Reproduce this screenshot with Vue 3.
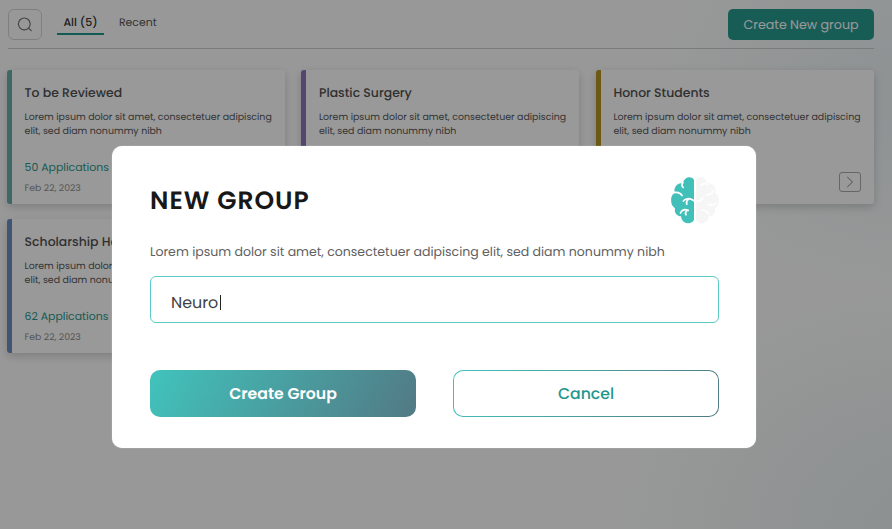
<script setup>
const cards = [
  { title: 'To be Reviewed', tone: 'teal', count: '50 Applications' },
  { title: 'Plastic Surgery', tone: 'purple', count: '' },
  { title: 'Honor Students', tone: 'gold', count: '' },
  { title: 'Scholarship Holders', tone: 'blue', count: '62 Applications' },
]
</script>

<template>
  <div class="page">
    <header class="topbar">
      <button class="search" aria-label="Search">
        <svg width="16" height="16" viewBox="0 0 16 16" fill="none" stroke="#747474" stroke-width="1.2" stroke-linecap="round">
          <circle cx="7.3" cy="6.9" r="5.9" />
          <path d="M11.6 11.2 14.3 13.6" />
        </svg>
      </button>
      <nav class="tabs">
        <a class="tab active">All (5)</a>
        <a class="tab">Recent</a>
      </nav>
      <button class="new-group">Create New group</button>
    </header>

    <main class="grid">
      <article v-for="c in cards" :key="c.title" class="card" :class="c.tone">
        <h3>{{ c.title }}</h3>
        <p class="desc">Lorem ipsum dolor sit amet, consectetuer adipiscing<br />elit, sed diam nonummy nibh</p>
        <div class="foot">
          <div v-if="c.count">
            <div class="count">{{ c.count }}</div>
            <div class="date">Feb 22, 2023</div>
          </div>
          <span class="go">
            <svg width="8" height="12" viewBox="0 0 8 12" fill="none" stroke="#858585" stroke-width="1"><path d="M1.3 1 6.5 6 1.3 11" /></svg>
          </span>
        </div>
      </article>
    </main>

    <div class="overlay">
      <section class="modal">
        <div class="modal-head">
          <h2>NEW GROUP</h2>
          <svg class="brain" width="48" height="47" viewBox="0 0 48 47">
            <path fill="#41c0ba" d="M23 2.8C21.2-.3 17-.4 14.5 1.7 12.8 3 12.1 4.8 12.2 6.4 8.3 5.8 5 7.5 3.9 11 3.1 12.7 3.4 14.3 4 15.7 1 17.1-.1 20.3.1 23.6.2 27.2 1.5 29.8 4 31.2 3 36 6.1 39.4 10.1 39.3 10.3 43.3 13.4 46.5 17.2 46.3 20 46.3 22 45 23 43.1Z" />
            <path fill="#f6f6f6" d="M25 2.8C26.8-.3 31-.4 33.5 1.7 35.2 3 35.9 4.8 35.8 6.4 39.7 5.8 43 7.5 44.1 11 44.9 12.7 44.6 14.3 44 15.7 47 17.1 48.1 20.3 47.9 23.6 47.8 27.2 46.5 29.8 44 31.2 45 36 41.9 39.4 37.9 39.3 37.7 43.3 34.6 46.5 30.8 46.3 28 46.3 26 45 25 43.1Z" />
            <g fill="none" stroke="#fff" stroke-width="1.7" stroke-linecap="round">
              <path d="M11.8 5.8C10.5 7.6 10.8 9.4 12.2 10.4M3 15.6C6.7 14.7 9.5 16 11.1 18.6M12.4 24C14 21.6 18 20.9 20.7 22.5 24.5 25 29.5 25 31.5 20.8M17.2 22.3C15.6 23.6 15.2 25.4 15.8 27.2M9.5 36C10.9 33 14 32 17.2 33.4M16 33.3C14.4 34.8 14 36.3 15 37.8" />
              <path d="M30.3 8.2C32 6.4 34.8 6.1 36.5 7.6M35.5 17.8C38.8 17.9 41.3 16.5 42 13.8M37.3 27.2C40 28.6 43 28 45 26M31.8 33C33.8 33.2 36.5 34.3 37.8 37.5" />
            </g>
          </svg>
        </div>
        <p class="lead">Lorem ipsum dolor sit amet, consectetuer adipiscing elit, sed diam nonummy nibh</p>
        <div class="field"><span>Neuro</span><i class="caret"></i></div>
        <div class="actions">
          <button class="primary">Create Group</button>
          <button class="secondary">Cancel</button>
        </div>
      </section>
    </div>
  </div>
</template>

<style>
body { margin: 0; }
</style>

<style scoped>
.page {
  position: relative;
  box-sizing: border-box;
  width: 892px;
  height: 529px;
  padding: 9px 18px 0 7px;
  overflow: hidden;
  font-family: Poppins, Inter, sans-serif;
  text-rendering: geometricPrecision;
  white-space: nowrap;
  background:
    radial-gradient(ellipse 260px 210px at 102% 17%, rgba(230, 241, 243, 0.75), rgba(230, 241, 243, 0) 100%),
    radial-gradient(ellipse 320px 250px at 104% 100%, rgba(231, 239, 240, 0.95), rgba(231, 239, 240, 0) 100%),
    #fefefe;
}
button { font: inherit; text-rendering: inherit; padding: 0; }
h2, h3, p { margin: 0; }
.topbar {
  display: flex;
  align-items: flex-start;
  box-sizing: border-box;
  height: 40px;
  margin-left: 1px;
  border-bottom: 1px solid #cbcfcf;
}
.search {
  display: flex;
  align-items: center;
  justify-content: center;
  box-sizing: border-box;
  width: 34px;
  height: 31px;
  border: 1px solid #d4d4d4;
  border-radius: 6px;
  background: transparent;
}
.tabs { display: flex; margin-left: 15px; gap: 15px; }
.tab { height: 24px; line-height: 27px; font-size: 10.9px; color: #565656; }
.tab.active {
  width: 47px;
  text-align: center;
  font-size: 11px;
  font-weight: 500;
  color: #333;
  border-bottom: 2px solid #1f978d;
}
.new-group {
  width: 146px;
  height: 31px;
  margin-left: auto;
  padding-top: 2px;
  border: 0;
  border-radius: 5px;
  background: #28998f;
  color: #fff;
  font-size: 12.65px;
}
.grid {
  display: grid;
  grid-template-columns: repeat(3, 278px);
  grid-auto-rows: 134px;
  gap: 15px 16.4px;
  margin-top: 21px;
}
.card {
  box-sizing: border-box;
  padding: 14px 12px 0 12.6px;
  border-left: 5px solid;
  border-radius: 3px;
  background: #fff;
  box-shadow: 0 3px 10px rgba(0, 0, 0, 0.18);
}
.teal { border-color: #66aeaa; }
.purple { border-color: #9173bb; }
.gold { border-color: #b59420; }
.blue { border-color: #6c8cc2; }
.card h3 { font-size: 12.45px; font-weight: 500; line-height: 19px; color: #505050; }
.desc { margin-top: 8px; font-size: 9.43px; line-height: 14px; color: #585858; }
.foot { display: flex; justify-content: space-between; margin-top: 20px; }
.count { height: 18px; line-height: 18px; font-size: 10.9px; color: #1f978d; }
.date { margin-top: 3px; line-height: 18px; font-size: 9.3px; color: #8f8f8f; }
.go {
  display: flex;
  align-items: center;
  justify-content: center;
  box-sizing: border-box;
  width: 22px;
  height: 20px;
  margin: 13px 1px 0 auto;
  border: 1px solid #aaa;
  border-radius: 3px;
}
.overlay {
  position: absolute;
  inset: 0;
  display: flex;
  align-items: flex-start;
  padding: 146px 0 0 112px;
  background: rgba(0, 0, 0, 0.4);
}
.modal {
  box-sizing: border-box;
  width: 644px;
  height: 302px;
  padding: 31px 37px 0 38px;
  border-radius: 10px;
  background: #fff;
  box-shadow: 0 0 1px rgba(255, 255, 255, 0.8);
}
.modal-head { display: flex; justify-content: space-between; height: 47px; }
.modal-head h2 { font-size: 25px; font-weight: 600; line-height: 48px; letter-spacing: 1px; color: #181818; }
.lead { margin-top: 19px; font-size: 12.54px; line-height: 20px; color: #606060; }
.field {
  display: flex;
  align-items: center;
  box-sizing: border-box;
  height: 47px;
  margin-top: 13px;
  padding: 6px 20px 0 20px;
  border: 1px solid #5accc5;
  border-radius: 6px;
  font-size: 15.9px;
  color: #414141;
}
.caret { width: 1px; height: 15px; margin-left: 2px; background: #222; }
.actions { display: grid; grid-template-columns: 266px 266px; justify-content: space-between; margin-top: 47px; }
.actions button { height: 47px; padding-top: 1px; border-radius: 10px; font-size: 15.7px; font-weight: 500; }
.actions .primary {
  border: 0;
  background: linear-gradient(118deg, #41c3bc, #527984);
  color: #fff;
  font-weight: 600;
}
.secondary {
  border: 1px solid transparent;
  background:
    linear-gradient(#fff, #fff) padding-box,
    linear-gradient(118deg, #41c3bc, #527984) border-box;
  color: #1f978d;
}
</style>
